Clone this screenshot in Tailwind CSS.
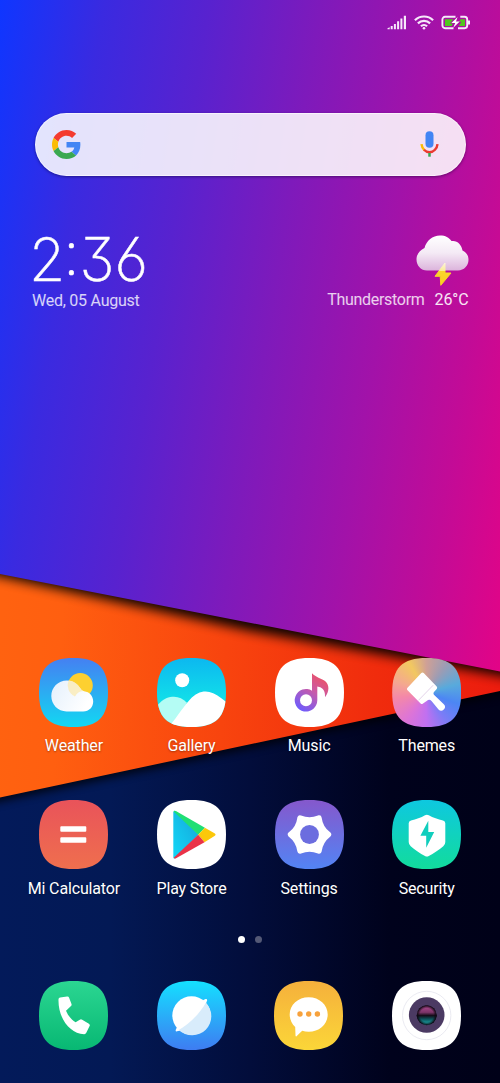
<!DOCTYPE html>
<html lang="en">
<head>
<meta charset="utf-8">
<meta name="viewport" content="width=device-width, initial-scale=1">
<title>Home screen</title>
<script src="https://cdn.jsdelivr.net/npm/@tailwindcss/browser@4"></script>
</head>
<body class="relative h-[1083px] w-[500px] overflow-hidden bg-[#00021c] font-['Roboto','Liberation_Sans',sans-serif] text-white">

<!-- Wallpaper -->
<svg class="absolute inset-0 -z-0" width="500" height="1083" viewBox="0 0 500 1083">
  <defs>
    <linearGradient id="wp-purple" gradientUnits="userSpaceOnUse" x1="0" y1="0" x2="602" y2="98">
      <stop offset="0" stop-color="#0f36ff"/><stop offset=".17" stop-color="#3a2ae0"/><stop offset=".34" stop-color="#5822cf"/>
      <stop offset=".52" stop-color="#7e1abb"/><stop offset=".7" stop-color="#a212a9"/><stop offset=".85" stop-color="#c20b97"/><stop offset="1" stop-color="#e60385"/>
    </linearGradient>
    <linearGradient id="wp-orange" gradientUnits="userSpaceOnUse" x1="0" y1="650" x2="500" y2="680">
      <stop offset="0" stop-color="#ff6210"/><stop offset=".12" stop-color="#ff5f10"/><stop offset=".45" stop-color="#f8440e"/><stop offset=".75" stop-color="#f02c0d"/><stop offset="1" stop-color="#ec1c0e"/>
    </linearGradient>
    <linearGradient id="wp-navy" x1="0" x2="1" y1="0" y2="0">
      <stop offset="0" stop-color="#031a5a"/><stop offset=".22" stop-color="#031955"/><stop offset=".5" stop-color="#020d3b"/><stop offset=".78" stop-color="#00021c"/><stop offset="1" stop-color="#000118"/>
    </linearGradient>
    <filter id="blur-a" x="-20%" y="-20%" width="140%" height="140%"><feGaussianBlur stdDeviation="6"/></filter>
    <filter id="blur-b" x="-20%" y="-20%" width="140%" height="140%"><feGaussianBlur stdDeviation="4"/></filter>
  </defs>
  <rect y="600" width="500" height="483" fill="url(#wp-navy)"/>
  <path d="M-30 560H530V689L-30 808Z" fill="#000" opacity=".75" filter="url(#blur-b)"/>
  <path d="M0 560H500V691L0 797.5Z" fill="url(#wp-orange)"/>
  <clipPath id="clip-orange"><path d="M0 560H500V691L0 797.5Z"/></clipPath>
  <g clip-path="url(#clip-orange)"><path d="M-30 480H530V681L250 631L-30 570Z" fill="#000" opacity=".95" filter="url(#blur-a)"/></g>
  <path d="M0 0H500V671.5L0 574Z" fill="url(#wp-purple)"/>
</svg>

<main class="relative flex h-full flex-col">
  <!-- Status bar -->
  <header class="flex h-[45px] items-center justify-end gap-[7px] pr-[29px]">
    <svg width="20" height="15" viewBox="0 0 20 15" fill="#f6e9fa"><path d="M.5 14.300V13.300L2.700 12.200V14.300ZM3.700 11h2v3.300h-2zM6.900 8.900h2v5.400h-2zM10.100 6.300h2v8h-2zM13.400 3.600h2v10.700h-2zM16.800 .8h2.200v13.500h-2.200z"/></svg>
    <svg width="20" height="15" viewBox="0 0 20 15" fill="none" stroke="#f6e9fa" stroke-width="2.200"><path d="M.9 5.200a13 13 0 0 1 18.200 0M3.900 8.400a8.700 8.700 0 0 1 12.200 0M6.900 11.300a4.500 4.500 0 0 1 6.200 0"/><circle cx="10" cy="13.200" r="1.300" fill="#f6e9fa" stroke="none"/></svg>
    <svg width="30" height="15" viewBox="0 0 30 15"><path d="M12.500 13.200H4A2.600 2.600 0 0 1 1.400 10.600V4.400A2.600 2.600 0 0 1 4 1.800H14.500M17 13.200h6.600a2.600 2.600 0 0 0 2.600-2.600V4.400a2.600 2.600 0 0 0-2.600-2.600h-4.300" fill="none" stroke="#f6e9fa" stroke-width="1.900"/><path d="M28 5.500v4" stroke="#f6e9fa" stroke-width="2"/><path d="M4 4.300h8.300L9 8.400h2.800l-1 2.500H4zM19.500 4.300H24v6.600h-6.300l2.800-4.200h-2.300z" fill="#50c81e"/><path d="M16.600 2L10.400 8h3.800L12.300 12.800 18.700 6.500H15z" fill="#fff"/></svg>
  </header>

  <!-- Search bar -->
  <section class="mt-[68px] ml-[35px] flex h-[62.500px] w-[431px] items-center justify-between rounded-full border border-white/60 bg-white/87 pr-[26px] pl-[15.500px] shadow-[0_1px_3px_rgba(0,0,40,0.45)]">
    <svg width="29" height="29" viewBox="0 0 48 48"><path fill="#f43b2f" d="M24 9.500c3.540 0 6.710 1.220 9.210 3.600l6.850-6.850C35.900 2.380 30.470 0 24 0 14.620 0 6.510 5.380 2.560 13.220l7.980 6.190C12.430 13.720 17.740 9.500 24 9.500z"/><path fill="#4285f4" d="M46.980 24.550c0-1.570-.15-3.090-.38-4.550H24v9.020h12.940c-.58 2.960-2.260 5.480-4.780 7.180l7.730 6c4.510-4.180 7.090-10.360 7.090-17.650z"/><path fill="#fbbc05" d="M10.530 28.590c-.48-1.450-.76-2.990-.76-4.590s.27-3.140.76-4.590l-7.980-6.190C.92 16.460 0 20.120 0 24c0 3.880.92 7.540 2.560 10.780l7.970-6.190z"/><path fill="#3aa850" d="M24 48c6.480 0 11.930-2.130 15.890-5.810l-7.730-6c-2.150 1.450-4.920 2.300-8.160 2.300-6.260 0-11.570-4.220-13.470-9.910l-7.980 6.190C6.510 42.620 14.620 48 24 48z"/></svg>
    <svg width="19" height="26" viewBox="0 0 19 26" fill="none"><rect x="5.500" y=".3" width="8" height="16.500" rx="4" fill="#4285f4"/><path d="M1.500 13.200c.3 2.600 1.300 4.700 3 6" stroke="#fbbc05" stroke-width="2.400"/><path d="M4 18.700c3 3.300 8 3.300 11 0 1.400-1.400 2.300-3.200 2.500-5.500" stroke="#ea3a30" stroke-width="2.400"/><path d="M9.500 22v3.700" stroke="#34a853" stroke-width="2.500"/></svg>
  </section>

  <!-- Clock and weather -->
  <section class="mt-[59px] flex h-[78px] justify-between pr-[31.500px] pl-[32px]">
    <div class="flex flex-col">
      <div class="-ml-[3px] h-[48px] w-[123px] origin-left scale-x-[0.98] font-['Inter'] text-[60px] leading-[48px] font-extralight whitespace-nowrap [-webkit-text-stroke:0.5px_white] [font-feature-settings:'ss01','cv09']"><span class="tracking-[-2px]">2</span><span class="tracking-[0px]">:</span><span class="tracking-[0px]">36</span></div>
      <p class="mt-[8px] text-[16px] leading-[20px] tracking-[-0.250px] text-white/80">Wed, 05 August</p>
    </div>
    <div class="flex flex-col items-end">
      <svg width="53" height="52" viewBox="0 0 53 52">
        <defs><linearGradient id="cl" x1="0" x2="0" y1="0" y2="1"><stop offset="0" stop-color="#fff"/><stop offset=".5" stop-color="#f4eaf5"/><stop offset="1" stop-color="#dcb4dc"/></linearGradient>
        <linearGradient id="bt" x1="0" x2="0" y1="0" y2="1"><stop offset="0" stop-color="#fdf3d8"/><stop offset=".34" stop-color="#faec98"/><stop offset=".36" stop-color="#fad62c"/><stop offset="1" stop-color="#fad020"/></linearGradient></defs>
        <path d="M11 35.500C5 35.500.5 30.600.5 24.500.5 19 4 15 8.500 13 10.500 5.500 16.500.5 24 .5c5.500 0 9 2 11.500 5.600C41 5 45.500 9.500 46.500 15.500c3.500 1.500 6 4.700 6 9.300 0 6-4.500 10.700-10.500 10.700z" fill="url(#cl)"/>
        <path d="M29 28L19 41.300h5.200L24.800 50.300 35 38h-6z" fill="url(#bt)" stroke="url(#bt)" stroke-width="1" stroke-linejoin="round"/>
      </svg>
      <p class="mt-[3px] flex gap-[10px] text-[16px] leading-[20px] text-white/80"><span class="tracking-[-0.300px]">Thunderstorm</span><span class="tracking-[-0.100px] text-white/90">26°C</span></p>
    </div>
  </section>

  <svg class="absolute" width="0" height="0"><defs>
    <path id="sq" d="M34.500 0C59 0 69 10 69 34.500S59 69 34.500 69 0 59 0 34.500 10 0 34.500 0Z"/>
    <clipPath id="sqc"><use href="#sq"/></clipPath>
    <linearGradient id="g-w" x1="0" x2="0" y1="0" y2="1"><stop offset="0" stop-color="#4580f2"/><stop offset="1" stop-color="#12d8f2"/></linearGradient>
    <linearGradient id="g-cl" x1="0" x2="1" y1="0" y2=".4"><stop offset="0" stop-color="#e4f0fc"/><stop offset="1" stop-color="#fff"/></linearGradient>
    <linearGradient id="g-g" x1="0" x2="0" y1="0" y2="1"><stop offset="0" stop-color="#0cb8f0"/><stop offset=".7" stop-color="#12e4e8"/></linearGradient>
    <linearGradient id="g-m" x1=".8" x2=".2" y1="0" y2="1"><stop offset="0" stop-color="#f0505e"/><stop offset=".45" stop-color="#c85aa8"/><stop offset="1" stop-color="#6c5cff"/></linearGradient>
    <linearGradient id="g-c" x1="0" x2="0" y1="0" y2="1"><stop offset="0" stop-color="#e9535a"/><stop offset="1" stop-color="#ef6f4e"/></linearGradient>
    <linearGradient id="g-pb" x1="0" x2="1" y1="1" y2="0"><stop offset="0" stop-color="#12d8f8"/><stop offset="1" stop-color="#16a4d8"/></linearGradient>
    <linearGradient id="g-s" x1="0" x2="0" y1="0" y2="1"><stop offset="0" stop-color="#8558cc"/><stop offset="1" stop-color="#5384f4"/></linearGradient>
    <linearGradient id="g-x" x1="0" x2="0" y1="0" y2="1"><stop offset="0" stop-color="#0ec8e0"/><stop offset="1" stop-color="#12dc9c"/></linearGradient>
    <linearGradient id="g-p" x1="0" x2="0" y1="0" y2="1"><stop offset="0" stop-color="#2bd692"/><stop offset="1" stop-color="#08b873"/></linearGradient>
    <linearGradient id="g-b" x1="0" x2="0" y1="0" y2="1"><stop offset="0" stop-color="#14e0ff"/><stop offset="1" stop-color="#3e7cf2"/></linearGradient>
    <linearGradient id="g-t" x1="0" x2="0" y1="0" y2="1"><stop offset="0" stop-color="#f5b03c"/><stop offset="1" stop-color="#fbd638"/></linearGradient>
    <linearGradient id="g-l" x1="0" x2="0" y1="0" y2="1"><stop offset="0" stop-color="#b04a90"/><stop offset=".35" stop-color="#7c3468"/><stop offset=".52" stop-color="#140c18"/><stop offset=".7" stop-color="#0c5058"/><stop offset="1" stop-color="#20b8b8"/></linearGradient>
    <radialGradient id="g-e"><stop offset=".7" stop-color="#0c0812" stop-opacity="0"/><stop offset="1" stop-color="#0c0812"/></radialGradient>
  </defs></svg>

  <!-- App grid -->
  <section class="mt-[345.400px] grid grid-cols-4 gap-y-[30.500px] pr-[14.500px] pl-[15.100px] text-center text-[16px] leading-[20px] tracking-[-0.150px] [text-shadow:0_1px_2px_rgba(0,0,0,0.35)]">
    <div class="flex h-[112px] flex-col items-center gap-[9.200px]">
      <svg width="69" height="69" viewBox="0 0 69 69"><use href="#sq" fill="url(#g-w)"/><circle cx="41.300" cy="27.500" r="12.500" fill="#fdd030"/><path d="M27.500 53.400C19 53.400 12.300 46.500 12.300 38S19 22.400 28 22.400c5.800 0 10.700 3.200 13.500 8.200.9 1.600 2 2.400 3.600 2.600C50.500 33.800 54.200 38 54.200 43.400c0 5.800-4.200 10-10 10z" fill="url(#g-cl)"/><path d="M29.500 22.500a15.500 15.500 0 0 1 12 8.100c.9 1.600 1.600 2.200 2.800 2.500A10 10 0 0 0 36 38.500 12.500 12.500 0 0 1 29.500 22.500Z" fill="#fbe9b0" opacity=".75"/></svg>
      <span>Weather</span>
    </div>
    <div class="flex h-[112px] flex-col items-center gap-[9.200px]">
      <svg width="69" height="69" viewBox="0 0 69 69"><g clip-path="url(#sqc)"><rect width="69" height="69" fill="url(#g-g)"/><circle cx="25.200" cy="22.300" r="7" fill="#fff"/><path d="M-1 49C6 40 12 38.700 17 38.700c5 0 9 2.300 13 6L18 69H-1Z" fill="#b4fcf4"/><path d="M12 69C22 56 27 48 33 41.500c9.500-10.300 20-10.500 31-1.500l6 4.500V69Z" fill="#fff"/></g></svg>
      <span>Gallery</span>
    </div>
    <div class="flex h-[112px] flex-col items-center gap-[9.200px]">
      <svg width="69" height="69" viewBox="0 0 69 69"><use href="#sq" fill="#fff"/><path fill-rule="evenodd" fill="url(#g-m)" d="M37 15.300C41 19.500 46 20.200 50 23c4.500 3.600 4.600 10.500 0 16.300.3-3.800-.5-7.500-3.500-9.300-1.600-.9-3-1.200-4.200-1.400V42.300A11.300 11.300 0 1 1 37 32.700ZM31 36.300a6 6 0 1 0 0 12 6 6 0 0 0 0-12Z"/></svg>
      <span>Music</span>
    </div>
    <div class="flex h-[112px] flex-col items-center gap-[9.200px]">
      <div class="h-[69px] w-[69px] bg-[conic-gradient(from_0deg,#cfa096_0deg,#9c9cb4_35deg,#58aadc_75deg,#4c86f4_110deg,#7c7cf6_145deg,#c070f0_180deg,#dc74d8_215deg,#f488a8_260deg,#f4a890_290deg,#f2c860_330deg,#cfa096_360deg)] [clip-path:path('M34.5_0C59_0_69_10_69_34.5S59_69_34.5_69_0_59_0_34.5_10_0_34.5_0Z')]">
        <svg width="69" height="69" viewBox="0 0 69 69"><path d="M15.300 30L29.300 15q1.200-1.100 2.400 0L44.700 28.500q1 1.300 0 2.500L42 34c-.8 1-.7 2 .2 3L51.800 46.300a3.700 3.700 0 0 1-5.300 5.200L39.500 43c-1.500-1.700-3-1.700-4.500-.2L31 45.500q-1.300 1-2.400 0L15.300 32q-.8-1 0-2Z" fill="#fff"/><path d="M26.500 42.300L41.200 27.200" stroke="#dcc8e4" stroke-width=".8"/></svg>
      </div>
      <span>Themes</span>
    </div>
    <div class="flex h-[112px] flex-col items-center gap-[9.200px]">
      <svg width="69" height="69" viewBox="0 0 69 69"><use href="#sq" fill="url(#g-c)"/><path d="M22.300 26.300h24q1 0 1 1v3.400q0 1-1 1h-24q-1 0-1-1v-3.400q0-1 1-1ZM22.300 37.300h24q1 0 1 1v3.400q0 1-1 1h-24q-1 0-1-1v-3.400q0-1 1-1Z" fill="#fff"/></svg>
      <span class="whitespace-nowrap">Mi Calculator</span>
    </div>
    <div class="flex h-[112px] flex-col items-center gap-[9.200px]">
      <svg width="69" height="69" viewBox="0 0 69 69"><use href="#sq" fill="#fff"/><path d="M16.300 12.500Q16.500 10 18.500 11L41.500 34.700 18.500 58.300Q16.300 59.200 16.300 57Z" fill="url(#g-pb)"/><path d="M16.600 11.500Q17.200 10.200 19.300 11.300L47.900 27.800 41.200 34.700Z" fill="#1fdf74"/><path d="M47.900 27.800L57.500 33.300q2.200 1.400 0 2.800L47.500 42.200 41.200 34.700Z" fill="#fcc80a"/><path d="M47.500 42.200L19.500 58Q17.200 59.200 16.700 57.700L41.200 34.700Z" fill="#ea3348"/></svg>
      <span>Play Store</span>
    </div>
    <div class="flex h-[112px] flex-col items-center gap-[9.200px]">
      <svg width="69" height="69" viewBox="0 0 69 69"><use href="#sq" fill="url(#g-s)"/><path d="M53.500 34.500Q45.300 28.250 44 18 34.500 22 25 18 23.700 28.250 15.500 34.500 23.700 40.750 25 51 34.500 47 44 51 45.300 40.750 53.500 34.500Z" fill="#fff" stroke="#fff" stroke-width="5.400" stroke-linejoin="round"/><circle cx="34.500" cy="34.500" r="9.400" fill="#6c6ddf"/></svg>
      <span>Settings</span>
    </div>
    <div class="flex h-[112px] flex-col items-center gap-[9.200px]">
      <svg width="69" height="69" viewBox="0 0 69 69"><use href="#sq" fill="url(#g-x)"/><path d="M33 15.200q1.900-1 3.800 0C41 17.700 46 19.300 51 20.400q2.300.6 2.300 2.900V42q0 2.700-2 4.200C47 50 41.500 53.300 36.800 56q-1.900 1-3.800 0C28 53.300 23 50 18.700 46.200q-2-1.500-2-4.200V23.300q0-2.300 2.300-2.900C24 19.300 29 17.700 33 15.200Z" fill="#fff"/><path d="M36.300 20.800L28.400 35.700H34.200V47.800L42.200 32H36.300Z" fill="#10cebd"/></svg>
      <span>Security</span>
    </div>
  </section>

  <!-- Page indicator -->
  <div class="mt-[23.500px] flex h-[7px] items-center justify-center gap-[10px]"><i class="h-[7px] w-[7px] rounded-full bg-white"></i><i class="h-[7px] w-[7px] rounded-full bg-[#545976]"></i></div>

  <!-- Dock -->
  <nav class="mt-[38px] grid grid-cols-4 justify-items-center pr-[14.800px] pl-[14.800px]">
    <svg width="69" height="69" viewBox="0 0 69 69"><use href="#sq" fill="url(#g-p)"/><path d="M19.500 18.200q.1-1.500 1.600-1.700l7-1q1.500-.2 2 1.200l2.400 6.200q.4 1.300-.5 2.200L27 29.700c2 4.800 5.200 8.800 9.600 11.500l4.200-2.500q1.300-.7 2.400.1l6.700 4q1.400.9.700 2.300l-3.300 6.700q-.7 1.500-2.200 1.400C30.500 52.500 19 37 19.500 18.200Z" fill="#fff"/></svg>
    <svg width="69" height="69" viewBox="0 0 69 69"><use href="#sq" fill="url(#g-b)"/><path d="M45.500 19.500L48.500 18q2-.5 1.600 1.500L48.800 23ZM20 46L18.700 49q-.3 1.700 1.300 1.300L23.500 49.500Z" fill="#fff"/><circle cx="34.500" cy="34.500" r="19.200" fill="#fff"/><path d="M48.800 21.700A19.200 19.200 0 0 1 21.800 49C31.500 43.500 43 32.500 48.800 21.700Z" fill="#d8ecfb"/></svg>
    <svg width="69" height="69" viewBox="0 0 69 69"><use href="#sq" fill="url(#g-t)"/><path d="M34.700 16.200c10.700 0 19 7.500 19 17.300s-8.300 17.300-19 17.300c-2.400 0-4.500-.3-6.500-1L22.500 55.200q-1 .6-1-.6L21.200 46C17.700 42.700 15.700 38.400 15.700 33.500c0-9.800 8.300-17.300 19-17.300Z" fill="#fff"/><g fill="#f7a23c"><circle cx="26" cy="33" r="2.700"/><circle cx="34.700" cy="33" r="2.700"/><circle cx="43.400" cy="33" r="2.700"/></g></svg>
    <svg width="69" height="69" viewBox="0 0 69 69"><use href="#sq" fill="#fff"/><circle cx="34.700" cy="34.500" r="24.200" fill="none" stroke="#e4e4ee" stroke-width=".8"/><circle cx="34.700" cy="34" r="17.800" fill="#4b3a63"/><circle cx="34.700" cy="34.200" r="10" fill="#0c0812"/><circle cx="34.700" cy="34.200" r="9.500" fill="url(#g-l)"/><circle cx="34.700" cy="34.200" r="9.800" fill="url(#g-e)"/></svg>
  </nav>
</main>
</body>
</html>
